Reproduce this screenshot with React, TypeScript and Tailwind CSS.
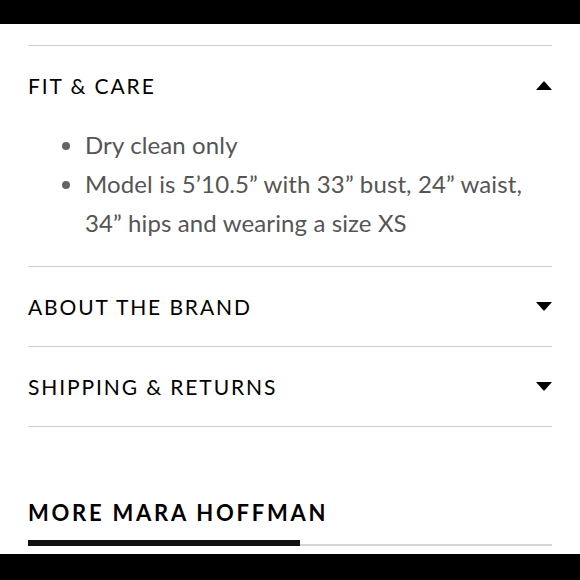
import React from "react";

function Caret({ up }: { up?: boolean }) {
  return (
    <svg width="16" height="9" viewBox="0 0 16 9" className="shrink-0">
      {up ? <polygon points="8,0 16,9 0,9" fill="#000" /> : <polygon points="0,0 16,0 8,9" fill="#000" />}
    </svg>
  );
}

function Header({ title, up }: { title: string; up?: boolean }) {
  return (
    <div className="flex h-[79px] items-center justify-between">
      <span className="text-[21px] tracking-[0.09em] text-black">{title}</span>
      <Caret up={up} />
    </div>
  );
}

export default function App() {
  return (
    <div className="w-[580px] h-[580px] bg-white flex flex-col overflow-hidden" style={{ fontFamily: "Lato, 'Noto Sans', sans-serif" }}>
      <div className="h-[24px] bg-black shrink-0" />
      <div className="px-[28px] flex-1 flex flex-col">
        <div className="h-[22px] border-b border-[#d0d0d0]" />
        <Header title="FIT & CARE" up />
        <ul className="pl-[57px] pb-[24px] text-[24px] leading-[39px] tracking-[0.005em] text-[#555] list-disc marker:text-[#666] border-b border-[#d0d0d0]">
          <li>Dry clean only</li>
          <li>Model is 5’10.5” with 33” bust, 24” waist, 34” hips and wearing a size XS</li>
        </ul>
        <div className="border-b border-[#d0d0d0]">
          <Header title="ABOUT THE BRAND" />
        </div>
        <div className="border-b border-[#d0d0d0]">
          <Header title="SHIPPING & RETURNS" />
        </div>
        <div className="flex h-[113px] items-end pb-[16px]">
          <span className="text-[22px] font-bold tracking-[0.125em] text-black leading-none">MORE MARA HOFFMAN</span>
        </div>
        <div className="flex items-end">
          <div className="w-[272px] h-[6px] bg-[#111]" />
          <div className="flex-1 h-[2px] bg-[#d6d6d6]" />
        </div>
      </div>
      <div className="h-[26px] bg-black shrink-0" />
    </div>
  );
}
